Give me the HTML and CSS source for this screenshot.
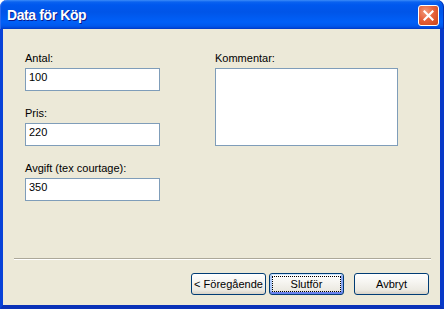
FILE: index.html
```html
<!DOCTYPE html>
<html lang="sv">
<head>
<meta charset="utf-8">
<title>Data för Köp</title>
<link rel="stylesheet" href="styles.css">
</head>
<body>
<div class="window">
  <div class="titlebar">
    <span class="title">Data för Köp</span>
    <button class="close" aria-label="Stäng">
      <svg width="11" height="11" viewBox="0 0 11 11"><path d="M1.5 1.5 L9.5 9.5 M9.5 1.5 L1.5 9.5" stroke="#fff" stroke-width="2.2" stroke-linecap="square"/></svg>
    </button>
  </div>
  <div class="frame">
    <div class="client">
      <div class="fields">
        <div class="col col-left">
          <div class="field">
            <label class="label">Antal:</label>
            <input class="textbox" type="text" value="100">
          </div>
          <div class="field">
            <label class="label">Pris:</label>
            <input class="textbox" type="text" value="220">
          </div>
          <div class="field">
            <label class="label">Avgift (tex courtage):</label>
            <input class="textbox" type="text" value="350">
          </div>
        </div>
        <div class="col col-right">
          <label class="label">Kommentar:</label>
          <textarea class="textarea"></textarea>
        </div>
      </div>
      <div class="footer">
        <div class="separator"></div>
        <div class="buttons">
          <button class="btn btn-prev">&lt; Föregående</button>
          <button class="btn btn-default"><span class="focus">Slutför</span></button>
          <button class="btn btn-cancel">Avbryt</button>
        </div>
      </div>
    </div>
  </div>
</div>
</body>
</html>
```

FILE: styles.css
```css
html, body {
  margin: 0;
  padding: 0;
  background: #ffffff;
}

.window {
  width: 444px;
  height: 309px;
  display: flex;
  flex-direction: column;
  font-family: "Liberation Sans", Arial, sans-serif;
  font-size: 11px;
  color: #000;
}

.titlebar {
  height: 29px;
  flex: none;
  box-sizing: border-box;
  border-radius: 7px 7px 0 0;
  background: linear-gradient(to bottom,
    #3c8cf8 0px, #0a62f0 2px, #0058ee 5px, #0055e8 12px,
    #0060f8 22px, #0058ec 26px, #0046d8 28px, #0038c0 29px);
  display: flex;
  align-items: center;
  padding: 0 5px 0 7px;
  box-shadow: inset 1px 0 0 #2a6af0, inset -1px 0 0 #0030b0;
}

.title {
  flex: 1;
  color: #fff;
  font-family: "Liberation Sans", Arial, sans-serif;
  font-weight: bold;
  font-size: 14px;
  letter-spacing: -0.4px;
  text-shadow: 1px 1px 0 #0a1a8a;
  line-height: 16px;
  padding-top: 1px;
}

.close {
  width: 21px;
  height: 21px;
  margin-top: 2px;
  padding: 0;
  box-sizing: border-box;
  border: 1px solid #ffffff;
  border-radius: 3px;
  background: radial-gradient(circle at 35% 30%, #f29a7a 0%, #e6623c 45%, #cc4316 100%);
  display: flex;
  align-items: center;
  justify-content: center;
}

.close svg {
  display: block;
}

.frame {
  flex: 1;
  display: flex;
  border-left: 3px solid #0842d8;
  border-right: 4px solid #0839c8;
  border-bottom: 4px solid #0a32b8;
}

.client {
  flex: 1;
  background: #ece9d8;
  display: flex;
  flex-direction: column;
}

.fields {
  display: flex;
  padding: 23px 0 0 22px;
}

.col {
  display: flex;
  flex-direction: column;
}

.col-left {
  width: 135px;
  gap: 16px;
}

.col-right {
  margin-left: 55px;
}

.field {
  display: flex;
  flex-direction: column;
}

.label {
  display: block;
  line-height: 13px;
  height: 13px;
  margin-bottom: 3px;
  white-space: nowrap;
}

.textbox {
  width: 135px;
  height: 23px;
  box-sizing: border-box;
  border: 1px solid #7f9db9;
  background: #fff;
  margin: 0;
  padding: 2px 3px 7px 3px;
  font-family: "Liberation Sans", Arial, sans-serif;
  font-size: 11px;
  line-height: 13px;
  color: #000;
  outline: none;
}

.textarea {
  width: 183px;
  height: 78px;
  box-sizing: border-box;
  border: 1px solid #7f9db9;
  background: #fff;
  margin: 0;
  padding: 1px 3px;
  resize: none;
  font-family: "Liberation Sans", Arial, sans-serif;
  font-size: 11px;
  outline: none;
}

.footer {
  margin-top: auto;
  padding-bottom: 10px;
}

.separator {
  height: 0;
  margin: 0 9px 0 11px;
  border-top: 1px solid #aca899;
  border-bottom: 1px solid #ffffff;
}

.buttons {
  display: flex;
  justify-content: flex-end;
  margin-top: 13px;
  padding-right: 11px;
}

.btn {
  width: 75px;
  height: 22px;
  box-sizing: border-box;
  margin: 0;
  padding: 0;
  border: 1px solid #003c74;
  border-radius: 3px;
  background: linear-gradient(to bottom, #ffffff 0%, #f6f5f1 40%, #eceae2 80%, #d8d2c6 100%);
  font-family: "Liberation Sans", Arial, sans-serif;
  font-size: 11px;
  color: #000;
  line-height: 18px;
  display: flex;
  align-items: center;
  justify-content: center;
  white-space: nowrap;
}

.btn-prev {
  margin-right: 3px;
}

.btn-default {
  margin-right: 10px;
  box-shadow: inset 0 1px 0 #cee7ff, inset 0 -2px 0 #6982ee, inset 2px 0 0 #aecbfa, inset -2px 0 0 #8ca8f2;
  padding: 2px;
}

.focus {
  flex: 1;
  align-self: stretch;
  display: flex;
  align-items: center;
  justify-content: center;
  border: 1px dotted #000;
}
```
